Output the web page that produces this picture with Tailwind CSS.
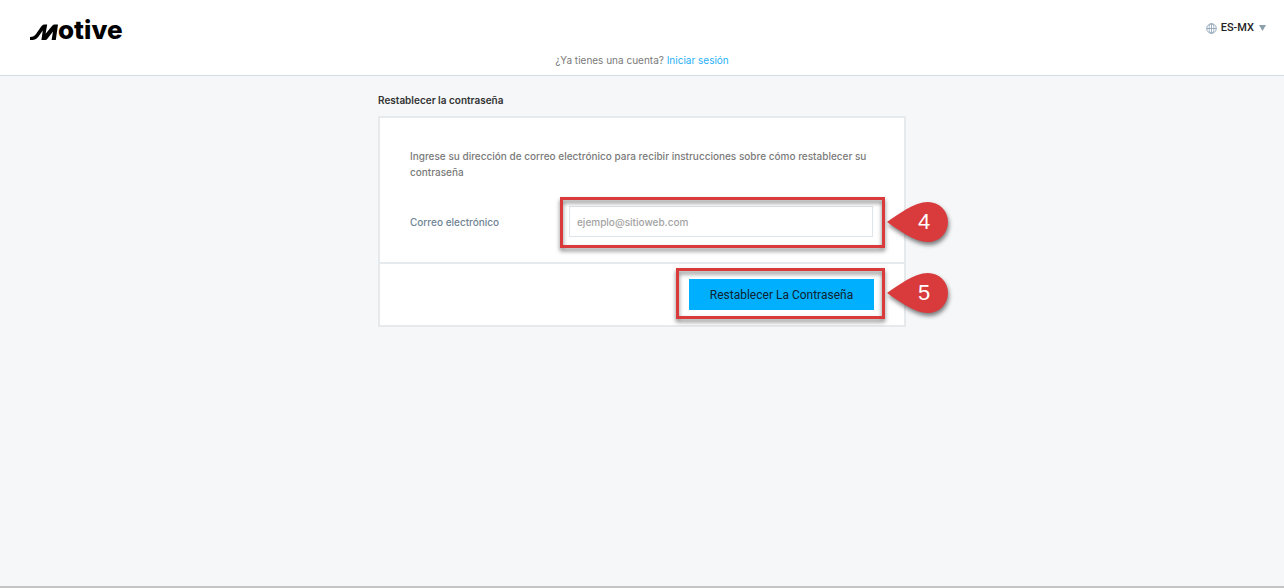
<!DOCTYPE html>
<html lang="es-MX">
<head>
    <meta charset="UTF-8">
    <meta name="viewport" content="width=device-width, initial-scale=1">
    <title>Motive - Restablecer la contraseña</title>
    <script src="https://cdn.jsdelivr.net/npm/@tailwindcss/browser@4"></script>
</head>
<body class="flex min-h-screen flex-col border-b-2 border-[#c4c4c4] bg-[#f5f7f9] font-['Inter','Liberation_Sans',sans-serif] text-[10px] leading-4 text-[#7a7a7a]">
    <!-- Header -->
    <header class="border-b border-[#d3dce0] bg-white pb-[7px]">
        <div class="flex items-start justify-between pt-2 pr-[18px] pl-[30px]">
            <a href="#" class="flex h-11 items-center text-black">
                <svg class="mt-1 h-4 w-7" viewBox="0 0 28 16" fill="currentColor">
                    <path d="M0 16V13C3 13 4.6 12 6 10L11 2.8C12.2 1 13.4.4 15 .4H17.2L15.6 9.8L22 2C23 .8 24 .4 25 .4H28L25.8 16H21.6L23 7.6L17.6 14.4C16.8 15.5 16 16 14.8 16H11.4L12.8 6.6L8.2 13C6.2 15.6 4 16 0 16Z"/>
                </svg>
                <span class="text-[26px] leading-8 font-extrabold">otive</span>
            </a>
            <button type="button" class="mt-3 flex items-center gap-1 font-['Roboto','Liberation_Sans',sans-serif] text-[11px] font-medium text-[#222222]">
                <svg class="size-[11px]" viewBox="0 0 12 12" fill="none" stroke="#8aa0b2">
                    <circle cx="6" cy="6" r="5.2"/>
                    <ellipse cx="6" cy="6" rx="2.6" ry="5.2" stroke-width=".8"/>
                    <path d="M6 .8V11.2M.8 6H11.2" stroke-width=".9"/>
                </svg>
                ES-MX
                <svg class="ml-px h-[6px] w-[7px]" viewBox="0 0 7 6" fill="#8c9fac">
                    <path d="M0 0H7L3.5 6Z"/>
                </svg>
            </button>
        </div>
        <p class="text-center">¿Ya tienes una cuenta? <a href="#" class="text-[#1fb1f9]">Iniciar sesión</a></p>
    </header>

    <!-- Restablecer -->
    <main class="mx-auto w-full max-w-[528px] pt-4">
        <h1 class="mb-2 font-semibold text-[#333333]">Restablecer la contraseña</h1>
        <form class="border-2 border-[#e6eaec] bg-white">
            <div class="px-[30px] pt-[30px] pb-[25px]">
                <p class="font-medium">Ingrese su dirección de correo electrónico para recibir instrucciones sobre cómo restablecer su contraseña</p>
                <div class="mt-[26px] flex items-center justify-between">
                    <label for="email" class="font-medium text-[#6f8494]">Correo electrónico</label>
                    <div class="relative mr-px w-[304px]">
                        <input id="email" type="email" placeholder="ejemplo@sitioweb.com" class="block h-[31px] w-full border border-[#dfe5e8] bg-white px-[7px] font-medium placeholder:text-[#a3a3a3]">
                        <!-- Paso 4 -->
                        <div class="pointer-events-none absolute -top-[9px] -right-[12px] -bottom-[11px] -left-[9px] border-[3px] border-[#d93a3c] drop-shadow-[0_3px_2px_rgba(0,0,0,0.5)]"></div>
                        <div class="absolute -top-1 left-full ml-[14px]">
                            <svg class="h-10 w-[62px] overflow-visible drop-shadow-[1px_3px_2px_rgba(0,0,0,0.5)]" viewBox="0 0 62 40" fill="#d93a3c">
                                <path d="M0 20C12 12 27 0 41 0A20 20 0 0 1 41 40C27 40 12 28 0 20Z"/>
                            </svg>
                            <span class="absolute inset-y-0 right-0 flex w-[50px] items-center justify-center font-['Liberation_Sans',sans-serif] text-[22px] text-white">4</span>
                        </div>
                    </div>
                </div>
            </div>
            <div class="flex justify-end border-t-2 border-[#e6eaec] px-[30px] py-[15px]">
                <div class="relative">
                    <button type="submit" class="block h-[31px] w-[185px] bg-[#00b0ff] font-['Roboto','Liberation_Sans',sans-serif] text-[12px] text-[#10222e]">Restablecer La Contraseña</button>
                    <!-- Paso 5 -->
                    <div class="pointer-events-none absolute -top-[11px] -right-[11px] -bottom-[9px] -left-[13px] border-[3px] border-[#d93a3c] drop-shadow-[0_3px_2px_rgba(0,0,0,0.5)]"></div>
                    <div class="absolute -top-1.5 left-full ml-[13px]">
                        <svg class="h-10 w-[62px] overflow-visible drop-shadow-[1px_3px_2px_rgba(0,0,0,0.5)]" viewBox="0 0 62 40" fill="#d93a3c">
                            <path d="M0 20C12 12 27 0 41 0A20 20 0 0 1 41 40C27 40 12 28 0 20Z"/>
                        </svg>
                        <span class="absolute inset-y-0 right-0 flex w-[50px] items-center justify-center font-['Liberation_Sans',sans-serif] text-[22px] text-white">5</span>
                    </div>
                </div>
            </div>
        </form>
    </main>
</body>
</html>
